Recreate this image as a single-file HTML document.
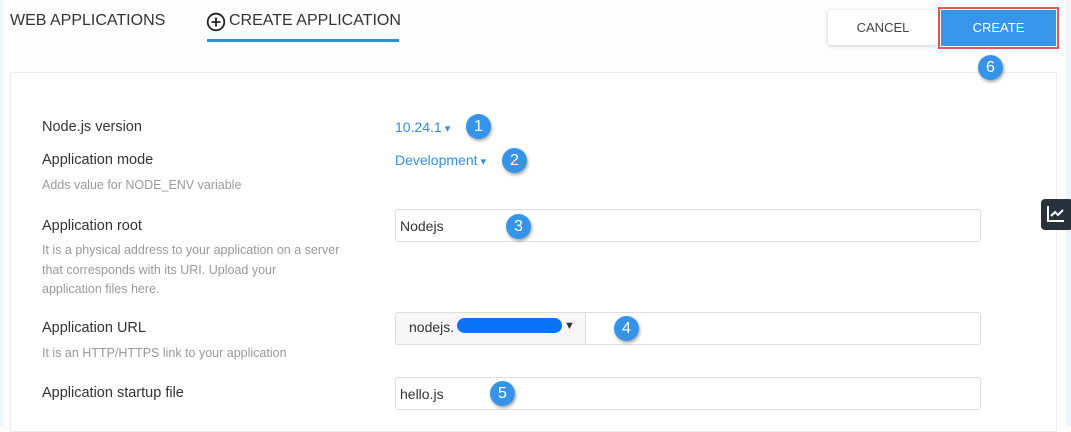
<!DOCTYPE html>
<html><head><style>
*{box-sizing:border-box;margin:0;padding:0}
body{width:1071px;height:426px;background:#fdfdfd;font-family:"Liberation Sans",sans-serif;position:relative;overflow:hidden;color:#333}
.a{position:absolute;white-space:nowrap}
.lbl{left:42px;font-size:14.5px;color:#333}
.hint{left:42px;font-size:12.5px;color:#999}
.b{position:absolute;width:25px;height:25px;border-radius:50%;background:#3594e8;color:#fff;font-size:16px;text-align:center;line-height:25px;box-shadow:1px 2px 3px rgba(0,0,0,.35);z-index:5}
.inp{position:absolute;left:395px;width:586px;height:33px;border:1px solid #ddd;border-radius:3px;background:#fff;font-size:14px;color:#333}
</style></head><body>
<div class="a" style="left:0;top:0;width:3px;height:426px;background:#eef5fb"></div>
<div class="a" style="right:0;top:0;width:5px;height:426px;background:#eef4fa"></div>
<div class="a" style="left:10px;top:12px;font-size:16px;color:#333">WEB APPLICATIONS</div>
<svg class="a" style="left:206px;top:12px" width="20" height="20" viewBox="0 0 20 20"><circle cx="10" cy="10" r="8.3" fill="none" stroke="#222" stroke-width="1.8"/><path d="M10 5.5v9M5.5 10h9" stroke="#222" stroke-width="1.8"/></svg>
<div class="a" style="left:229px;top:12px;font-size:16px;color:#333">CREATE APPLICATION</div>
<div class="a" style="left:207px;top:39px;width:192px;height:3px;background:#2b8fe0"></div>
<div class="a" style="left:10px;top:72px;width:1047px;height:360px;background:#fff;border:1px solid #ececec"></div>
<div class="a" style="left:828px;top:10px;width:110px;height:35px;background:#fff;box-shadow:0 1px 4px rgba(0,0,0,.2);border-radius:2px;font-size:13px;color:#444;text-align:center;line-height:35px">CANCEL</div>
<div class="a" style="left:938px;top:7px;width:121px;height:42px;border:2px solid #e05555"></div>
<div class="a" style="left:941px;top:10px;width:115px;height:36px;background:#3796ea;font-size:13px;color:#fff;text-align:center;line-height:36px">CREATE</div>
<div class="b" style="left:978px;top:55px">6</div>
<div class="a lbl" style="top:119px">Node.js version</div>
<div class="a" style="left:395px;top:119px;font-size:14px;color:#2f8fe0">10.24.1<span style="font-size:11px"> ▾</span></div>
<div class="b" style="left:466px;top:114px">1</div>
<div class="a lbl" style="top:152px">Application mode</div>
<div class="a" style="left:395px;top:152px;font-size:14px;color:#2f8fe0">Development<span style="font-size:11px"> ▾</span></div>
<div class="b" style="left:502px;top:148px">2</div>
<div class="a hint" style="top:178px">Adds value for NODE_ENV variable</div>
<div class="a lbl" style="top:218px">Application root</div>
<div class="a hint" style="top:241px;line-height:19.5px">It is a physical address to your application on a server<br>that corresponds with its URI. Upload your<br>application files here.</div>
<div class="inp" style="top:209px;padding:8px 0 0 4px">Nodejs</div>
<div class="b" style="left:506px;top:214px">3</div>
<div class="a lbl" style="top:320px">Application URL</div>
<div class="a hint" style="top:346px">It is an HTTP/HTTPS link to your application</div>
<div class="inp" style="top:312px"></div>
<div class="a" style="left:396px;top:313px;width:190px;height:31px;background:#f7f7f7;border-right:1px solid #ddd;border-radius:3px 0 0 3px"></div>
<div class="a" style="left:409px;top:319px;font-size:14px;color:#333">nodejs.</div>
<div class="a" style="left:457px;top:318px;width:105px;height:15px;background:#0a73f5;border-radius:8px"></div>
<div class="a" style="left:564px;top:320px;font-size:11px;color:#333">▼</div>
<div class="b" style="left:614px;top:316px">4</div>
<div class="a lbl" style="top:385px">Application startup file</div>
<div class="inp" style="top:377px;padding:8px 0 0 4px">hello.js</div>
<div class="b" style="left:490px;top:381px">5</div>
<div class="a" style="left:1041px;top:199px;width:32px;height:31px;background:#27323d;border-radius:4px"></div>
<svg class="a" style="left:1046px;top:204px" width="20" height="20" viewBox="0 0 20 20"><path d="M2 2v15h16" fill="none" stroke="#fff" stroke-width="2"/><path d="M5 12l4-4 3 3 5-5" fill="none" stroke="#fff" stroke-width="2"/></svg>
</body></html>
